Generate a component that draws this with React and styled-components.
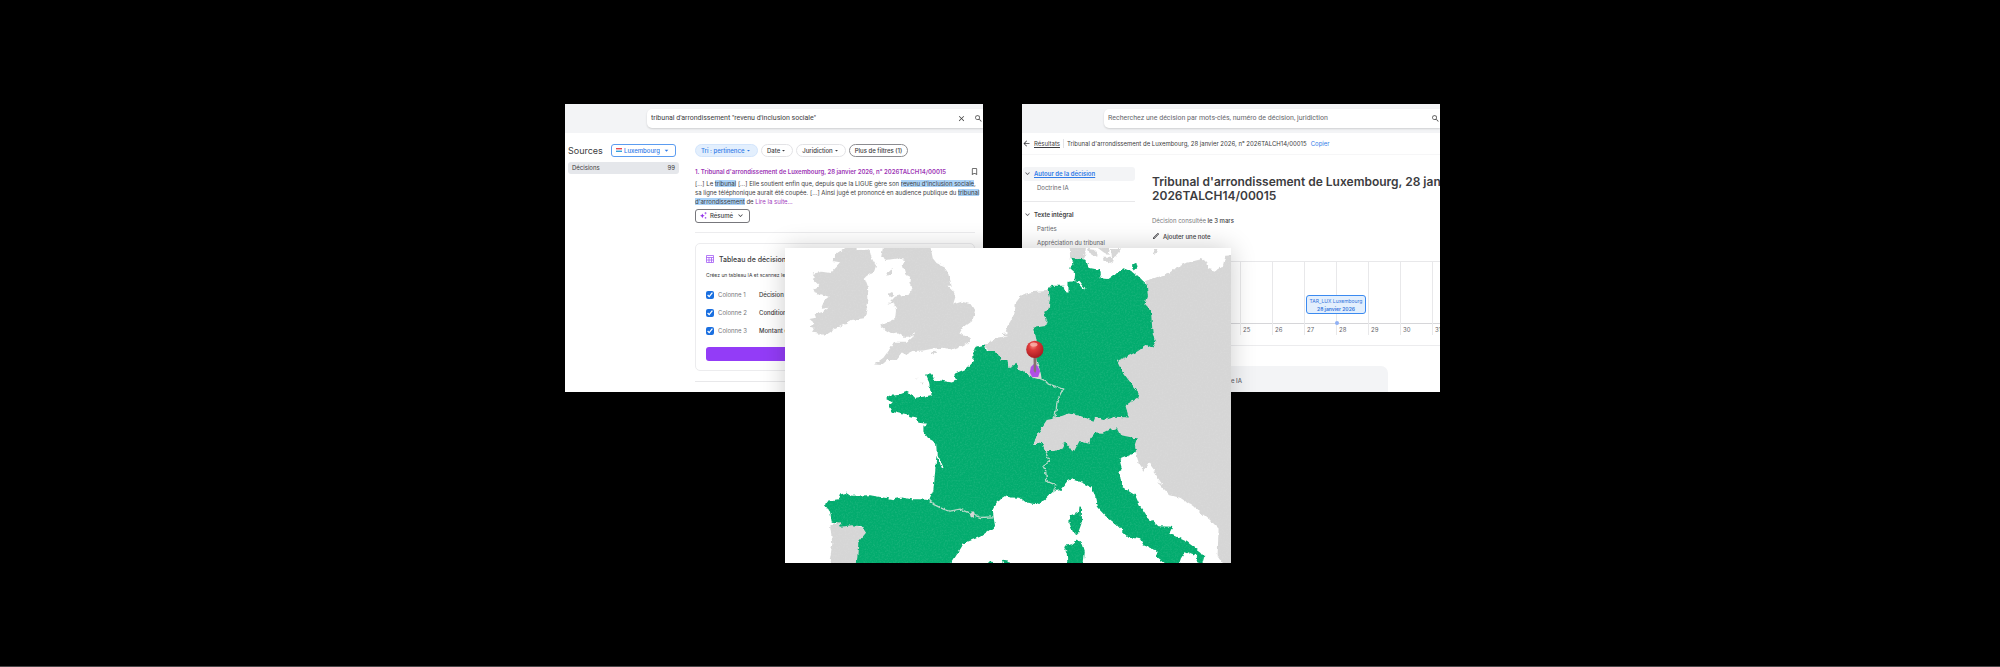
import React from 'react'
import styled, { createGlobalStyle } from 'styled-components'
import {
  MdArrowBack,
  MdArrowDropDown,
  MdBookmarkBorder,
  MdClose,
  MdKeyboardArrowDown,
  MdOutlineEdit,
  MdSearch,
} from 'react-icons/md'

const columns = [
  { label: 'Colonne 1', value: 'Décision' },
  { label: 'Colonne 2', value: 'Condition' },
  { label: 'Colonne 3', value: 'Montant en jeu' },
]

const days = ['', '', '', 25, 26, 27, 28, 29, 30, 31]

const SearchPanel = () => (
  <Panel>
    <TopBar>
      <SearchBox>
        <input
          aria-label='Recherche'
          defaultValue={'tribunal d\'arrondissement "revenu d\'inclusion sociale"'}
        />
        <IconButton aria-label='Effacer'>
          <MdClose />
        </IconButton>
        <IconButton aria-label='Rechercher'>
          <MdSearch />
        </IconButton>
      </SearchBox>
    </TopBar>
    <SearchBody>
      <Sources>
        <div className='head'>
          <h2>Sources</h2>
          <CountrySelect>
            <Flag viewBox='0 0 6 4' aria-hidden='true'>
              <path d='M0 0h6v1.4H0z' fill='#e5484d' />
              <path d='M0 2.6h6V4H0z' fill='#37a0dc' />
            </Flag>
            <select aria-label='Pays'>
              <option>Luxembourg</option>
            </select>
            <MdArrowDropDown />
          </CountrySelect>
        </div>
        <SourceRow href='#decisions'>
          <span>Décisions</span>
          <span>99</span>
        </SourceRow>
      </Sources>
      <Results>
        <Filters>
          <Pill as='div' $active>
            <select aria-label='Tri'>
              <option>Tri : pertinence</option>
            </select>
            <MdArrowDropDown />
          </Pill>
          <Pill>
            Date
            <MdArrowDropDown />
          </Pill>
          <Pill>
            Juridiction
            <MdArrowDropDown />
          </Pill>
          <Pill $strong>Plus de filtres (1)</Pill>
        </Filters>
        <Result>
          <div className='title'>
            <a href='#resultat'>
              1. Tribunal d'arrondissement de Luxembourg, 28 janvier 2026, n°
              2026TALCH14/00015
            </a>
            <IconButton aria-label='Enregistrer'>
              <MdBookmarkBorder />
            </IconButton>
          </div>
          <p>
            [...] Le <mark>tribunal</mark> [...] Elle soutient enfin que, depuis
            que la LIGUE gère son <mark>revenu d'inclusion sociale</mark>,
            <br />
            sa ligne téléphonique aurait été coupée. [...] Ainsi jugé et prononcé
            en audience publique du <mark>tribunal</mark>
            <br />
            <mark>d'arrondissement</mark> de <a href='#suite'>Lire la suite…</a>
          </p>
          <SummaryButton>
            <svg viewBox='0 0 12 12' aria-hidden='true'>
              <path
                d='M4 2.5Q4.4 6 8 6.5 4.4 7 4 10.5 3.6 7 0 6.5 3.6 6 4 2.5z'
                fill='#9333ea'
              />
              <path d='M9.500 0v4M7.500 2h4M9.500 8.500v3M8 10h3' stroke='#9333ea' />
            </svg>
            Résumé
            <MdKeyboardArrowDown />
          </SummaryButton>
        </Result>
        <TableCard>
          <h3>
            <svg viewBox='0 0 16 16' aria-hidden='true'>
              <path
                d='M1 1h14v14H1zM1 5h14M1 10h14M6 5v10M11 5v10'
                fill='none'
                stroke='currentColor'
                strokeWidth='1.6'
              />
            </svg>
            Tableau de décisions
          </h3>
          <p>Créez un tableau IA et scannez les décisions</p>
          {columns.map((column) => (
            <CheckRow key={column.label}>
              <input type='checkbox' defaultChecked />
              <span>{column.label}</span>
              <b>{column.value}</b>
            </CheckRow>
          ))}
          <CreateButton aria-label='Créer le tableau' />
        </TableCard>
        <hr />
      </Results>
    </SearchBody>
  </Panel>
)

const DecisionPanel = () => (
  <Panel>
    <TopBar>
      <SearchBox>
        <input
          aria-label='Recherche'
          placeholder='Recherchez une décision par mots-clés, numéro de décision, juridiction'
        />
        <IconButton aria-label='Rechercher'>
          <MdSearch />
        </IconButton>
      </SearchBox>
    </TopBar>
    <Breadcrumb>
      <MdArrowBack />
      <a href='#resultats'>Résultats</a>
      <span>
        Tribunal d'arrondissement de Luxembourg, 28 janvier 2026, n°
        2026TALCH14/00015
      </span>
      <button>Copier</button>
    </Breadcrumb>
    <DecisionBody>
      <Outline>
        <OutlineHead $active href='#autour'>
          <MdKeyboardArrowDown />
          <span>Autour de la décision</span>
        </OutlineHead>
        <OutlineItem href='#doctrine'>Doctrine IA</OutlineItem>
        <hr />
        <OutlineHead href='#texte'>
          <MdKeyboardArrowDown />
          <span>Texte intégral</span>
        </OutlineHead>
        <OutlineItem href='#parties'>Parties</OutlineItem>
        <OutlineItem href='#appreciation'>Appréciation du tribunal</OutlineItem>
      </Outline>
      <Decision>
        <h1>
          Tribunal d'arrondissement de Luxembourg, 28 janvier 2026, n°
          <br />
          2026TALCH14/00015
        </h1>
        <p>
          Décision consultée <b>le 3 mars</b>
        </p>
        <NoteButton>
          <MdOutlineEdit />
          Ajouter une note
        </NoteButton>
        <Timeline>
          {days.map((day, i) => (
            <Day key={i}>
              <span>{day}</span>
            </Day>
          ))}
          <Event>
            TAR_LUX Luxembourg
            <b>28 janvier 2026</b>
          </Event>
        </Timeline>
        <AiCard>Doctrine IA</AiCard>
      </Decision>
    </DecisionBody>
  </Panel>
)

const EuropeMap = () => (
  <MapFrame viewBox='15 9 1338 945' role='img' aria-label='Europe'>
    <defs>
      <filter
        id='land'
        x='0'
        y='0'
        width='100%'
        height='100%'
        colorInterpolationFilters='sRGB'
      >
        <feTurbulence type='fractalNoise' baseFrequency='0.07' numOctaves='2' seed='4' result='coast' />
        <feDisplacementMap
          in='SourceGraphic'
          in2='coast'
          scale='12'
          xChannelSelector='R'
          yChannelSelector='G'
          result='rough'
        />
        <feTurbulence type='fractalNoise' baseFrequency='0.2' numOctaves='2' result='noise' />
        <feColorMatrix
          in='noise'
          values='0 0 0 0 1  0 0 0 0 1  0 0 0 0 1  0.2 0 0 0 -0.08'
          result='grain'
        />
        <feComposite in='grain' in2='rough' operator='in' result='grainIn' />
        <feMerge>
          <feMergeNode in='rough' />
          <feMergeNode in='grainIn' />
        </feMerge>
      </filter>
      <radialGradient id='pin' cx='0.4' cy='0.3' r='0.7'>
        <stop offset='0' stopColor='#f58a80' />
        <stop offset='0.35' stopColor='#dd3a3a' />
        <stop offset='1' stopColor='#a81c22' />
      </radialGradient>
    </defs>
    <path d='M15 9h1338v945H15z' fill='#fff' />
    <g filter='url(#land)'>
      <g fill='#d6d6d6'>
        {/* Ireland */}
        <path d='M203 0 228 0 230 15 268 14 275 40 288 62 282 80 262 92 254 98 264 125 265 165 258 200 252 220 215 225 190 240 165 252 140 268 112 268 118 262 96 260 104 248 88 245 100 232 88 222 108 218 104 208 130 200 146 188 122 192 134 165 146 155 130 150 104 142 100 132 118 122 98 102 106 96 98 86 125 80 150 84 180 52 158 48 168 28z' />
        {/* Great Britain */}
        <path d='M310 0 450 0 458 40 470 55 490 62 505 85 515 122 502 122 520 140 526 158 520 178 545 170 575 178 585 195 578 225 550 245 538 265 568 278 570 290 545 304 520 315 490 308 460 310 430 316 400 318 380 328 368 322 350 345 322 345 305 360 282 358 310 338 330 310 342 290 380 290 410 262 385 275 370 275 350 262 335 265 312 252 300 242 325 232 345 222 348 195 340 172 322 180 345 155 365 150 385 150 395 135 388 112 390 92 375 85 368 60 375 45 355 40 320 45 303 38z' />
        <path d='M319 92 328 76 336 73 333 86 324 95zM326 146 336 141 343 150 336 157 328 155zM452 320 462 317 468 322 461 328zM405 398 412 398 410 403zM420 412 432 413 428 418z' />
        {/* Denmark */}
        <path d='M868 0 918 0 915 28 908 42 870 40zM922 12 945 15 955 35 935 30zM948 5 990 8 985 30 970 22zM968 35 990 35 998 48 985 55 970 48zM992 12 1022 12 1008 32 996 40zM1118 12 1130 12 1136 22 1122 26z' />
        {/* Belgium and the Netherlands */}
        <path d='M614 298 650 278 684 272 660 268 684 264 674 256 690 230 703 205 708 172 725 150 750 142 800 138 815 122 850 140 850 400 780 410 640 350z' />
        {/* Switzerland and Austria */}
        <path d='M760 600 770 570 800 525 860 500 950 500 1050 460 1100 600 900 640 795 622 785 590z' />
        {/* Central and eastern Europe */}
        <path d='M1098 108 1175 80 1190 66 1215 55 1265 42 1275 48 1285 72 1305 77 1328 62 1335 32 1370 30 1370 970 1332 960 1312 930 1315 850 1290 825 1240 785 1200 758 1170 750 1140 720 1128 690 1122 675 1105 652 1090 677 1075 655 1068 622 980 520 980 330 1080 200z' />
        {/* Portugal */}
        <path d='M150 842 178 825 258 850 262 960 147 960 157 895z' />
      </g>
      <g fill='#02ac6e'>
        {/* France */}
        <path d='M614 298 590 305 580 320 580 350 560 370 525 385 520 395 532 405 515 412 490 408 462 404 456 388 438 388 445 405 450 430 455 450 430 455 405 458 395 448 380 440 355 450 330 452 318 462 338 472 325 482 335 500 370 508 410 517 415 533 440 536 430 542 430 560 445 580 468 592 470 622 465 680 460 735 448 765 460 778 490 792 510 798 540 792 570 805 600 817 640 815 638 790 650 768 678 750 690 757 720 758 738 772 770 777 792 765 820 738 827 720 800 708 796 675 788 662 808 650 795 618 785 590 760 600 770 570 800 525 822 520 832 465 848 432 810 418 785 405 755 397 730 380 710 370 710 356 685 368 682 345 662 345 655 330 640 318 620 318z' />
        {/* Spain */}
        <path d='M448 765 420 762 395 762 365 757 340 762 270 750 215 752 200 743 180 748 175 762 145 767 135 780 150 800 155 830 178 832 182 845 215 840 245 843 258 863 235 890 230 960 510 960 545 905 550 895 600 875 645 843 640 815 600 817 570 805 540 792 510 798 490 792 460 778zM668 944 684 946 690 954 672 954zM628 950 640 950 640 960 628 960z' />
        {/* Germany */}
        <path d='M872 38 918 44 925 68 960 75 962 85 958 100 985 102 1005 88 1030 70 1055 80 1070 92 1088 110 1100 120 1103 155 1095 178 1112 195 1115 235 1118 268 1128 290 1120 310 1100 300 1070 320 1040 335 1010 348 1025 378 1045 405 1065 430 1078 445 1075 457 1055 470 1036 483 1046 517 1005 515 970 525 945 517 940 530 900 512 865 505 845 513 822 517 832 465 848 432 810 418 785 405 782 385 778 370 772 355 766 330 770 290 765 265 762 248 795 243 800 225 792 200 805 195 810 160 805 135 815 122 850 122 855 138 865 140 865 110 890 108 915 132 900 112 880 105 882 80 870 70 880 55zM1056 58 1068 52 1072 68 1062 78 1056 70z' />
        {/* Italy */}
        <path d='M795 618 825 618 845 610 855 590 880 622 898 588 928 597 930 580 945 562 970 563 990 553 1010 550 1020 570 1070 580 1064 598 1068 622 1045 632 1018 643 1025 670 1018 682 1025 725 1065 750 1080 785 1100 815 1135 843 1177 845 1167 865 1220 890 1260 920 1272 935 1265 960 1255 955 1248 930 1215 918 1202 940 1195 960 1162 960 1130 935 1128 915 1090 900 1080 882 1045 875 1005 835 975 812 950 785 945 755 935 727 905 713 875 702 860 710 840 735 820 738 827 720 800 708 796 675 788 662 808 650z' />
        <path d='M898 784 903 785 902 815 904 835 892 868 878 860 868 835 868 812 896 800zM852 902 875 897 893 883 908 898 914 918 910 960 862 960 860 925z' />
      </g>
      <g fill='none' stroke='#b5d9c8' strokeWidth='4' strokeLinejoin='round'>
        <path d='M448 765 460 778 490 792 510 798 540 792 570 805 600 817 640 815M820 738 827 720 800 708 796 675 788 662 808 650 795 618M824 520 832 465 848 432 810 418 785 405' />
      </g>
      <path d='M568 802h16l-4 14h-8z' fill='#d5d5d5' />
      <path d='M895 108 914 132M468 625 480 650 488 668M458 610 472 628' fill='none' stroke='#fff' strokeWidth='5' />
      {/* Croatian islands */}
      <path d='M1108 655 1118 690M1125 690 1145 718M1190 765 1230 795' fill='none' stroke='#fff' strokeWidth='3' />
    </g>
    {/* Luxembourg */}
    <path d='M752 366 762 356 772 362 780 378 774 396 756 396 749 382z' fill='#b04fe6' />
    <path d='M760 336h9l-1 42-3 6-4-6z' fill='#85736f' />
    <circle cx='764' cy='313' r='26' fill='url(#pin)' />
    <ellipse cx='761' cy='298' rx='11' ry='6' fill='#fbb5ac' opacity='0.8' />
  </MapFrame>
)

const App = () => (
  <Stage>
    <GlobalStyle />
    <Scene>
      <Panels>
        <SearchPanel />
        <DecisionPanel />
      </Panels>
      <EuropeMap />
    </Scene>
  </Stage>
)

export default App

const GlobalStyle = createGlobalStyle`
  * {
    box-sizing: border-box;
  }
  body {
    margin: 0;
    background: #000;
  }
  h1, h2, h3, p {
    margin: 0;
  }
  button, input, select {
    font: inherit;
    color: inherit;
    padding: 0;
    border: 0;
    background: none;
    outline: none;
  }
  select {
    appearance: none;
  }
  a {
    color: inherit;
    text-decoration: none;
  }
  hr {
    margin: 0;
    border: 0;
    border-top: 1px solid #e8e8ea;
  }
  svg {
    flex: none;
  }
`

const Stage = styled.main`
  display: flex;
  align-items: center;
  min-height: 100vh;
  padding: 0 28% 0 28.25%;
  box-shadow: inset 0 -1px #4a4648;
  font-family: Inter, 'Liberation Sans', sans-serif;
  font-size: 6px;
  line-height: 9px;
  color: #3c3c40;
`

const Scene = styled.div`
  flex: 1;
  min-width: 0;
`

const Panels = styled.div`
  display: flex;
  gap: 39px;
`

const Panel = styled.section`
  flex: 1;
  min-width: 0;
  aspect-ratio: 418 / 288;
  overflow: hidden;
  background: #fff;
`

const MapFrame = styled.svg`
  position: relative;
  display: block;
  width: 51%;
  margin: -16.45% 0 0 25.15%;
  box-shadow: 0 0 24px rgba(0, 0, 0, 0.2);
`

const TopBar = styled.header`
  padding: 5px 0 5px 82px;
  background: #f3f4f6;
`

const SearchBox = styled.div`
  display: flex;
  align-items: center;
  gap: 8px;
  height: 19px;
  padding: 0 0 0 4px;
  border-radius: 5px 0 0 5px;
  background: #fff;
  box-shadow: 0 1px 2px rgba(0, 0, 0, 0.15);
  input {
    flex: 1;
    min-width: 0;
    font-family: Roboto, 'Liberation Sans', sans-serif;
    font-size: 7px;
  }
  input::placeholder {
    color: #66666b;
    opacity: 1;
  }
`

const IconButton = styled.button`
  display: flex;
  font-size: 9px;
  color: #444;
`

const SearchBody = styled.div`
  display: flex;
  gap: 16px;
  padding: 11px 8px 0 3px;
`

const Sources = styled.aside`
  width: 111px;
  .head {
    display: flex;
    align-items: center;
    justify-content: space-between;
    padding-right: 3px;
  }
  h2 {
    font-size: 9px;
    font-weight: 400;
  }
`

const CountrySelect = styled.div`
  display: flex;
  align-items: center;
  gap: 2px;
  height: 13px;
  padding: 0 4px;
  border: 1px solid #5b9cf0;
  border-radius: 3px;
  font-weight: 500;
  color: #2f7be8;
  svg:last-child {
    width: 9px;
    height: 9px;
  }
`

const Flag = styled.svg`
  width: 6px;
  height: 4px;
`

const SourceRow = styled.a`
  display: flex;
  align-items: center;
  justify-content: space-between;
  height: 12px;
  margin-top: 5px;
  padding: 0 4px;
  border-radius: 3px;
  background: #e5e7eb;
`

const Results = styled.div`
  flex: 1;
  min-width: 0;
`

const Filters = styled.div`
  display: flex;
  gap: 3px;
`

const Pill = styled.button`
  display: flex;
  align-items: center;
  height: 13px;
  padding: 0 5px;
  border: 1px solid ${(p) => (p.$active ? '#d3e5fc' : p.$strong ? '#8c8c90' : '#e3e3e6')};
  border-radius: 7px;
  background: ${(p) => (p.$active ? '#e3effd' : '#fff')};
  color: ${(p) => (p.$active ? '#2f7be8' : 'inherit')};
  font-weight: 500;
  svg {
    width: 7px;
    height: 7px;
  }
`

const Result = styled.article`
  padding: 10px 0 9px;
  border-bottom: 1px solid #ececee;
  .title {
    display: flex;
    justify-content: space-between;
    height: 12px;
    margin-right: -4px;
    white-space: nowrap;
    font-weight: 600;
    color: #9c36b5;
  }
  p {
    white-space: nowrap;
  }
  p a {
    color: #a23bbd;
  }
  mark {
    background: #abd3f8;
    color: inherit;
  }
`

const SummaryButton = styled.button`
  display: flex;
  align-items: center;
  gap: 3px;
  height: 14px;
  margin-top: 3px;
  padding: 0 4px;
  border: 1px solid #77777c;
  border-radius: 3px;
  font-weight: 500;
  svg {
    width: 7px;
    height: 7px;
  }
  svg:last-child {
    width: 9px;
    height: 9px;
  }
`

const TableCard = styled.section`
  margin: 10px 0;
  padding: 11px 10px 9px;
  border: 1px solid #ececee;
  border-radius: 5px;
  white-space: nowrap;
  h3 {
    display: flex;
    align-items: center;
    gap: 5px;
    font-size: 7px;
    font-weight: 500;
  }
  h3 svg {
    width: 8px;
    height: 8px;
    color: #a35cf5;
  }
  p {
    margin: 7px 0 6px;
    font-size: 5px;
  }
`

const CheckRow = styled.label`
  display: flex;
  align-items: center;
  height: 18px;
  span {
    width: 41px;
    color: #77777c;
  }
  b {
    font-weight: 500;
  }
  input {
    width: 8px;
    height: 8px;
    margin: 0 4px 0 0;
    accent-color: #1a6fe0;
  }
`

const CreateButton = styled.button`
  display: block;
  width: 100%;
  height: 14px;
  margin-top: 7px;
  border-radius: 3px;
  background: #933cf7;
`

const Breadcrumb = styled.nav`
  display: flex;
  align-items: center;
  gap: 3px;
  height: 22px;
  border-bottom: 1px solid #f6f6f7;
  white-space: nowrap;
  svg {
    width: 9px;
    height: 9px;
  }
  a {
    text-decoration: underline;
  }
  span {
    padding: 0 1px 0 3px;
    border-left: 1px solid #e3e3e6;
  }
  button {
    color: #2f7be8;
  }
`

const DecisionBody = styled.div`
  display: flex;
  gap: 17px;
  padding: 12px 0 0 1px;
`

const Outline = styled.aside`
  flex: none;
  width: 112px;
  hr {
    margin: 6px 0;
  }
`

const OutlineHead = styled.a`
  display: flex;
  align-items: center;
  gap: 2px;
  height: 14px;
  border-radius: 3px;
  background: ${(p) => (p.$active ? '#f3f4f6' : 'none')};
  color: ${(p) => (p.$active ? '#2f7be8' : 'inherit')};
  font-weight: 600;
  text-decoration: ${(p) => (p.$active ? 'underline' : 'none')};
  svg {
    width: 9px;
    height: 9px;
    color: #55555a;
  }
`

const OutlineItem = styled.a`
  display: block;
  padding-left: 14px;
  line-height: 14px;
  color: #66666b;
`

const Decision = styled.div`
  flex: 1;
  min-width: 0;
  white-space: nowrap;
  h1 {
    margin: 8px 0 13px;
    font-size: 12px;
    line-height: 14px;
    font-weight: 600;
  }
  p {
    color: #77777c;
  }
  p b {
    font-weight: 500;
    color: #3c3c40;
  }
`

const NoteButton = styled.button`
  display: flex;
  align-items: center;
  gap: 3px;
  margin-top: 7px;
  font-weight: 500;
  svg {
    width: 8px;
    height: 8px;
  }
`

const Timeline = styled.div`
  position: relative;
  display: flex;
  height: 85px;
  margin: 20px 0 0 -8px;
  border-top: 1px solid #e8e8ea;
  border-bottom: 1px solid #ececee;
`

const Day = styled.div`
  flex: none;
  display: flex;
  align-items: flex-end;
  width: 32px;
  height: 73px;
  border-left: 1px solid #e8e8ea;
  span {
    flex: 1;
    height: 12px;
    padding: 1px 2px;
    border-top: 1px solid #d6d6d9;
    color: #66666b;
  }
`

const Event = styled.div`
  position: absolute;
  top: 33px;
  left: 162px;
  width: 60px;
  padding: 1px 0 0;
  border: 1px solid #3b8af0;
  border-radius: 3px;
  background: #e3effd;
  color: #3474dc;
  font-size: 5px;
  line-height: 8px;
  text-align: center;
  b {
    display: block;
    font-weight: 600;
  }
  &::after {
    content: '';
    position: absolute;
    top: 25px;
    left: 28px;
    width: 4px;
    height: 4px;
    border-radius: 50%;
    background: #8fb0f5;
  }
`

const AiCard = styled.section`
  width: 236px;
  height: 60px;
  margin-top: 20px;
  padding: 10px 58px;
  border-radius: 7px;
  background: #f3f4f6;
  color: #66666b;
  font-weight: 500;
`
